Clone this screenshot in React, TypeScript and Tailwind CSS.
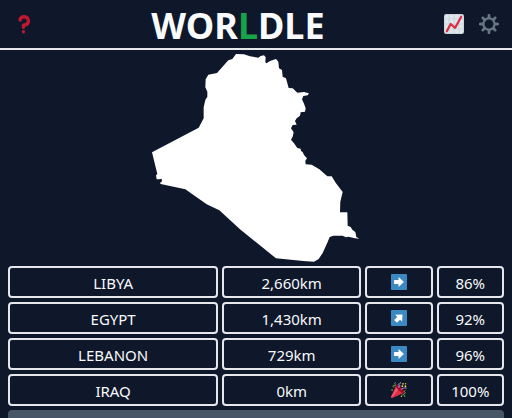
import React from "react";

type Direction = "east" | "northeast" | "found";

type Guess = {
  country: string;
  distance: string;
  direction: Direction;
  proximity: string;
};

const guesses: Guess[] = [
  { country: "LIBYA", distance: "2,660km", direction: "east", proximity: "86%" },
  { country: "EGYPT", distance: "1,430km", direction: "northeast", proximity: "92%" },
  { country: "LEBANON", distance: "729km", direction: "east", proximity: "96%" },
  { country: "IRAQ", distance: "0km", direction: "found", proximity: "100%" },
];

function QuestionIcon() {
  return (
    <svg viewBox="0 0 36 36" className="size-5" fill="#be1931" aria-hidden="true">
      <path d="M17 27c-1.657 0-3-1.343-3-3v-4c0-1.657 1.343-3 3-3 .603-.006 6-1 6-5 0-2-2-4-5-4-2.441 0-4 2-4 3 0 1.657-1.343 3-3 3s-3-1.343-3-3c0-4.878 4.58-9 10-9 8 0 11 5.982 11 11 0 4.145-2.277 7.313-6.413 8.92-.9.351-1.79.587-2.587.747V24c0 1.657-1.343 3-3 3z" />
      <circle cx="17" cy="32" r="3" />
    </svg>
  );
}

function ChartIcon() {
  return (
    <svg viewBox="0 0 36 36" className="size-5" aria-hidden="true">
      <rect width="36" height="36" rx="4" fill="#ccd6dd" />
      <rect x="2" y="2" width="32" height="32" rx="2" fill="#e1e8ed" />
      <path d="M9 2v32M18 2v32M27 2v32M2 9h32M2 18h32M2 27h32" stroke="#ccd6dd" strokeWidth="2" />
      <path
        d="M5 31l7-13 8 7L31 5"
        fill="none"
        stroke="#dd2e44"
        strokeWidth="4"
        strokeLinecap="round"
        strokeLinejoin="round"
      />
    </svg>
  );
}

function GearIcon() {
  const teeth = [0, 45, 90, 135, 180, 225, 270, 315];
  return (
    <svg viewBox="0 0 36 36" className="size-5" fill="#66757f" aria-hidden="true">
      {teeth.map((angle) => (
        <path key={angle} d="M15 8l.8-7q.2-1 1-1h2.400q.8 0 1 1l.8 7z" transform={`rotate(${angle} 18 18)`} />
      ))}
      <circle cx="18" cy="18" r="10" fill="none" stroke="#66757f" strokeWidth="4" />
    </svg>
  );
}

function ArrowIcon({ turn }: { turn: number }) {
  return (
    <svg viewBox="0 0 36 36" className="size-4" aria-hidden="true">
      <rect width="36" height="36" rx="2" fill="#3b88c3" />
      <path d="M7 13.500h10V7l12 11-12 11v-6.500H7z" fill="#fff" transform={`rotate(${turn} 18 18)`} />
    </svg>
  );
}

function PartyIcon() {
  return (
    <svg viewBox="0 0 36 36" className="size-4" aria-hidden="true">
      <path
        fill="#dd2e44"
        d="M11.626 7.488c-.112.112-.197.247-.268.395l-.008-.008L.134 33.141l.011.011c-.208.403.14 1.223.853 1.937.713.713 1.533 1.061 1.936.853l.01.01L28.21 24.735l-.008-.009c.147-.07.282-.155.395-.269 1.562-1.562-.971-6.627-5.656-11.313-4.687-4.686-9.752-7.218-11.315-5.656z"
      />
      <path
        fill="#ea596e"
        d="M13 12L.416 32.506l-.282.635.011.011c-.208.403.14 1.223.853 1.937.232.232.473.408.709.557L17 17l-4-5z"
      />
      <path
        fill="#a0041e"
        d="M23.012 13.066c4.67 4.672 7.263 9.652 5.789 11.124-1.473 1.474-6.453-1.118-11.126-5.788-4.671-4.672-7.263-9.654-5.79-11.127 1.474-1.473 6.454 1.119 11.127 5.791z"
      />
      <g fill="none" strokeWidth="2.200" strokeLinecap="round" strokeLinejoin="round">
        <path stroke="#aa8dd8" d="M18 12.500c-3-.5-2.500-3 .5-2.800 3 .2 3-2.500 0-2.800-3-.3-2.500-3.200.5-3 2.500.2 3-1.400 2.500-2.700" />
        <path stroke="#77b255" d="M30.500 33c1.500-1.500 1-3-1-3.500-2-.5-2-3 .5-3.500 2.500-.5 3-2.500 1-3.500-1.500-.7-1.500-2.500.5-3.500" />
        <path stroke="#77b255" d="M6 12C3 9.500 4.500 7 7 8c2.500 1 4-1.500 2-3.500-1-1-.5-2.500 1-3.500" />
        <path stroke="#aa8dd8" d="M22.500 17c3-3.500 7.500-4.200 12-3.500" />
      </g>
      <g fill="#ffcc4d">
        <circle cx="25.500" cy="9.500" r="2" />
        <circle cx="32.500" cy="9.500" r="2" />
        <circle cx="27" cy="4" r="2" />
        <circle cx="33" cy="4" r="1.500" />
        <circle cx="23.500" cy="32" r="1.500" />
      </g>
      <circle cx="2.500" cy="18" r="2" fill="#5c913b" />
      <circle cx="25.500" cy="29" r="1.500" fill="#5c913b" />
    </svg>
  );
}

function DirectionIcon({ direction }: { direction: Direction }) {
  if (direction === "found") return <PartyIcon />;
  return <ArrowIcon turn={direction === "northeast" ? -45 : 0} />;
}

function CountryShape() {
  return (
    <svg viewBox="456 150 624 648" className="h-[216px] w-52" fill="#fff" role="img" aria-label="Country outline">
      <path d="M456 457L596 383 611 355 611 322 616 300 622 290 622 275 616 262 617 238 625 224 651 219 685 181 697 177 708 162 732 163 750 169 775 173 782 168 792 166 797 172 796 187 800 190 805 186 812 182 828 177 835 185 837 205 846 210 848 230 858 235 866 264 878 265 892 278 912 276 927 280 923 286 910 288 906 298 912 311 917 325 915 335 902 337 900 347 890 355 885 363 890 374 878 375 873 385 881 397 878 410 873 419 882 430 892 444 902 446 903 453 908 456 912 465 921 475 916 482 917 493 935 494 958 508 982 529 995 529 1007 548 1028 576 1021 605 1020 637 1042 637 1043 677 1052 681 1057 689 1066 696 1069 711 1078 716 1065 715 1045 710 1038 712 1028 707 1000 707 989 711 982 728 968 759 956 777 942 785 910 783 828 775 720 688 658 631 620 613 556 568 482 552 480 549 486 544 485 536 477 538 470 538 468 526 472 522z" />
    </svg>
  );
}

const cell = "flex h-8 items-center justify-center rounded border-2 border-gray-200";
const textCell = `${cell} pt-0.5`;

export default function App() {
  return (
    <div className="flex h-screen flex-col overflow-hidden bg-[#0f172a] font-['Noto_Sans','Open_Sans',sans-serif] text-slate-50">
      <header className="flex shrink-0 items-center border-b-2 border-gray-200 px-3">
        <button type="button" aria-label="How to play" className="p-0.5">
          <QuestionIcon />
        </button>
        <h1 className="flex-1 pt-1 text-center text-4xl leading-[44px] font-bold">
          WOR<span className="text-[#16a34a]">L</span>DLE
        </h1>
        <div className="flex">
          <button type="button" aria-label="Statistics" className="pr-2 pl-1">
            <ChartIcon />
          </button>
          <button type="button" aria-label="Settings" className="pr-px pl-[7px]">
            <GearIcon />
          </button>
        </div>
      </header>
      <main className="flex flex-col px-2">
        <div className="flex justify-center">
          <CountryShape />
        </div>
        <table className="block text-[15px] leading-6">
          <tbody className="flex flex-col gap-1">
            {guesses.map((guess) => (
              <tr key={guess.country} className="grid grid-cols-7 gap-1">
                <td className={`${textCell} col-span-3`}>{guess.country}</td>
                <td className={`${textCell} col-span-2`}>{guess.distance}</td>
                <td className={cell}>
                  <DirectionIcon direction={guess.direction} />
                </td>
                <td className={textCell}>{guess.proximity}</td>
              </tr>
            ))}
          </tbody>
        </table>
        <button type="button" aria-label="Share" className="mt-1 h-10 rounded bg-[#475569]" />
      </main>
    </div>
  );
}
